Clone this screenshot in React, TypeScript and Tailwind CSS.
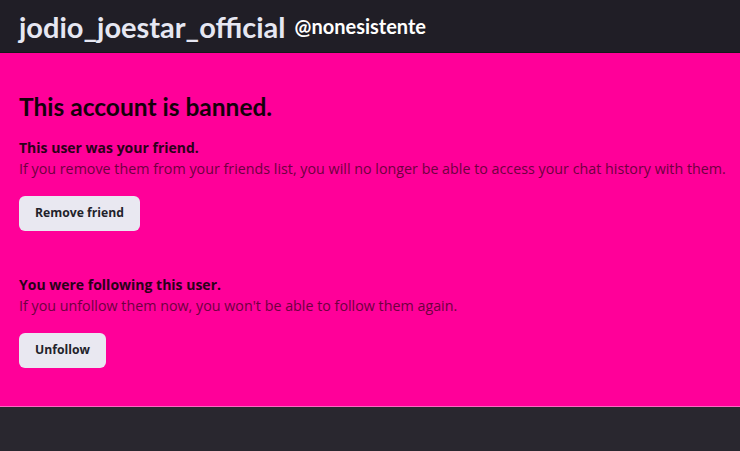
import React from "react";

export default function App() {
  const body = { fontFamily: "'Open Sans', 'Noto Sans', sans-serif" };
  return (
    <div className="w-[740px] h-[451px] bg-[#29272f] flex flex-col overflow-hidden" style={body}>
      <header className="h-[53px] bg-[#201e26] flex items-center px-[19px] gap-[9px] border-b border-[#17161b]">
        <span className="text-[29px] font-bold text-[#e6e7f2] leading-none" style={{ fontFamily: "Lato, sans-serif" }}>
          jodio_joestar_official
        </span>
        <span className="text-[20px] font-bold text-white leading-none" style={{ fontFamily: "Lato, sans-serif" }}>
          @nonesistente
        </span>
      </header>
      <main className="bg-[#ff0099] h-[354px] px-[19px] pt-[40px] border-b border-[#ff66c2]">
        <h1 className="text-[24.5px] font-bold text-[#14000b] leading-[28px]" style={{ fontFamily: "Lato, sans-serif" }}>
          This account is banned.
        </h1>
        <section className="mt-[17px]">
          <div className="text-[14px] font-bold text-[#2a0018] leading-[20px]">This user was your friend.</div>
          <div className="text-[14.3px] text-[#6e0040] leading-[22px] whitespace-nowrap">
            If you remove them from your friends list, you will no longer be able to access your chat history with them.
          </div>
          <button className="mt-[16px] h-[35px] px-[16px] rounded-[6px] bg-[#e9e8f1] text-[12.2px] font-bold text-[#22222a]">
            Remove friend
          </button>
        </section>
        <section className="mt-[44px]">
          <div className="text-[14px] font-bold text-[#2a0018] leading-[20px]">You were following this user.</div>
          <div className="text-[14.3px] text-[#6e0040] leading-[22px] whitespace-nowrap">
            If you unfollow them now, you won't be able to follow them again.
          </div>
          <button className="mt-[16px] h-[35px] px-[16px] rounded-[6px] bg-[#e9e8f1] text-[12.2px] font-bold text-[#22222a]">
            Unfollow
          </button>
        </section>
      </main>
    </div>
  );
}
